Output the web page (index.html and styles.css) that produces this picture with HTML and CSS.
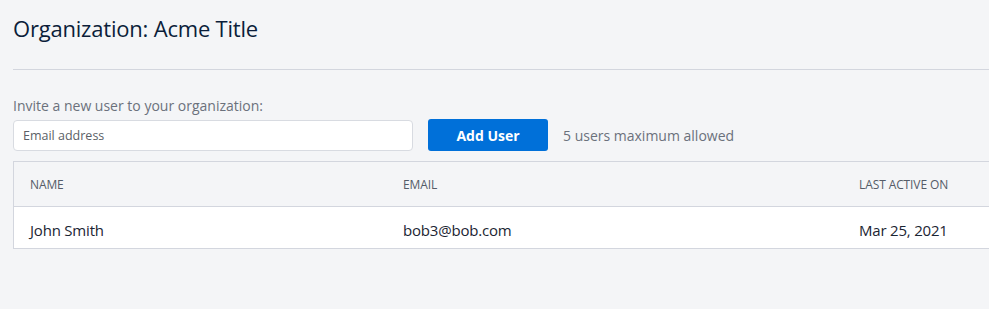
FILE: index.html
```html
<!DOCTYPE html>
<html lang="en">
  <head>
    <meta charset="UTF-8" />
    <title>Organization</title>
    <link rel="stylesheet" href="styles.css">
  </head>
  <body>
    <div class="page">
      <h1>Organization: Acme Title</h1>
      <hr class="divider" />

      <form class="invite">
        <label for="email">Invite a new user to your organization:</label>
        <div class="invite-row">
          <input type="email" id="email" placeholder="Email address" />
          <button type="button">Add User</button>
          <span class="limit">5 users maximum allowed</span>
        </div>
      </form>

      <div class="users">
        <div class="row head">
          <div>Name</div>
          <div>Email</div>
          <div>Last Active On</div>
        </div>
        <div class="row">
          <div>John Smith</div>
          <div>bob3@bob.com</div>
          <div>Mar 25, 2021</div>
        </div>
      </div>
    </div>
  </body>
</html>
```

FILE: styles.css
```css
* {
  margin: 0;
  padding: 0;
  box-sizing: border-box;
  font-family: "Open Sans", "Noto Sans", sans-serif;
}

html,
body {
  overflow: hidden;
}

body {
  background: #f4f5f7;
  color: #1b2533;
}

.page {
  width: 1010px;
  padding: 13px 0 0 13px;
}

h1 {
  font-size: 22px;
  font-weight: 400;
  color: #0b1e3a;
  line-height: 30px;
  letter-spacing: -0.2px;
}

.divider {
  border: none;
  border-top: 1px solid #d3d6de;
  margin-top: 26px;
}

.invite {
  margin-top: 26px;
}

label {
  display: block;
  font-size: 14px;
  color: #6b717c;
  line-height: 20px;
  margin-bottom: 3px;
}

.invite-row {
  display: flex;
  align-items: center;
}

input {
  width: 400px;
  height: 31px;
  padding: 0 9px;
  border: 1px solid #d8dbe1;
  border-radius: 4px;
  background: white;
  font-size: 12.5px;
  color: #333;
}

input::placeholder {
  color: #5b5f66;
}

button {
  margin-left: 15px;
  width: 120px;
  height: 32px;
  border: none;
  border-radius: 3px;
  background-color: #0070d9;
  color: white;
  font-size: 14px;
  font-weight: 700;
}

.limit {
  margin-left: 15px;
  font-size: 14px;
  color: #6b717c;
}

.users {
  margin-top: 10px;
  border: 1px solid #d3d6de;
  border-right: none;
}

.row {
  display: grid;
  grid-template-columns: 373px 456px 1fr;
  height: 41px;
  padding-top: 4px;
  align-items: center;
  background: white;
  font-size: 15px;
  letter-spacing: -0.2px;
  color: #1b2533;
}

.row > div {
  padding-left: 16px;
}

.row.head {
  height: 45px;
  padding-top: 0;
  background: #f4f5f7;
  border-bottom: 1px solid #d3d6de;
  font-size: 12px;
  letter-spacing: -0.1px;
  text-transform: uppercase;
  color: #555c68;
}
```
